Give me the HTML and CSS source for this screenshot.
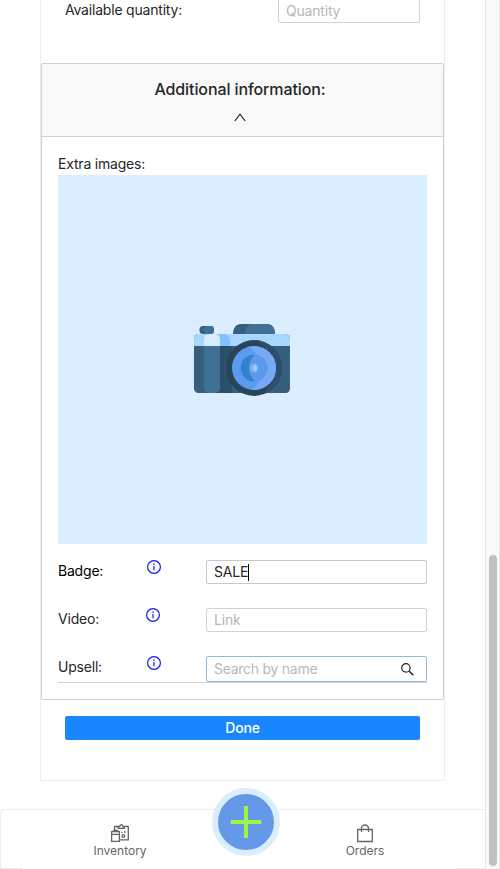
FILE: index.html
```html
<!DOCTYPE html>
<html lang="en">
<head>
<meta charset="utf-8">
<title>Add product</title>
<link rel="stylesheet" href="styles.css">
</head>
<body>
<div class="app">
  <div class="page">
    <main class="form">
      <div class="quantity">
        <label for="qty">Available quantity:</label>
        <input id="qty" class="field" type="text" placeholder="Quantity">
      </div>
      <section class="panel">
        <header class="panel-head">
          <h2>Additional information:</h2>
          <svg class="chevron" width="12" height="9" viewBox="0 0 12 9"><path d="M.8 8 6 1.2 11.2 8"/></svg>
        </header>
        <div class="panel-body">
          <div class="extra">Extra images:</div>
          <div class="picture">
            <svg width="120" height="94" viewBox="0 0 120 94">
              <defs>
                <clipPath id="body"><rect x="12" y="22" width="96" height="59" rx="4.5"/></clipPath>
                <clipPath id="ring"><circle cx="72" cy="56" r="28"/></clipPath>
                <clipPath id="glass"><circle cx="72" cy="56" r="22"/></clipPath>
                <clipPath id="iris"><circle cx="72" cy="56" r="13.3"/></clipPath>
                <clipPath id="flash"><path d="M51 22c0-6 3-10 8-10h26c5 0 8 4 8 10z"/></clipPath>
              </defs>
              <rect x="17.500" y="14" width="14.5" height="8" rx="3.5" fill="#365f7e"/>
              <path d="M24 14h5c4 0 4 8 0 8h-5c-3-2-3-6 0-8z" fill="#407093"/>
              <g clip-path="url(#flash)">
                <path fill="#365f7e" d="M50 12h45v10H50z"/>
                <path fill="#407093" d="M63 22c0-5 2-10 8-10h22v10z"/>
              </g>
              <g clip-path="url(#body)">
                <path fill="#365f7e" d="M12 22h96v59H12z"/>
                <path fill="#a9d6ff" d="M12 22h96v12H12z"/>
                <path fill="#82c3ff" d="M32 22h11q5 2 5 7v5H32z"/>
                <path fill="#2b506b" d="M32 34h18v47H32z"/>
                <rect x="22" y="22" width="16" height="59" rx="5" fill="#407093"/>
                <path fill="#d6edff" d="M22 34v-7q0-5 5-5h6q5 0 5 5v7z"/>
              </g>
              <g clip-path="url(#ring)">
                <path fill="#294459" d="M44 28h56v56H44z"/>
                <path fill="#2c506b" d="M72 28c18 8 29 39 7 56h25V28z"/>
              </g>
              <g clip-path="url(#glass)">
                <path fill="#5b9bed" d="M50 34h44v44H50z"/>
                <path fill="#78a9f8" d="M64 34c17 8 22 29 6 44h24V34z"/>
              </g>
              <g clip-path="url(#iris)">
                <path fill="#377fd0" d="M58 42h28v28H58z"/>
                <path fill="#5b9bed" d="M73 42c-8 9-8 19 0 28h14V42z"/>
              </g>
              <circle cx="72" cy="56" r="4.2" fill="#80b0f8"/>
              <ellipse cx="73.5" cy="56" rx="1.7" ry="3.2" fill="#a9cbfc"/>
            </svg>
          </div>
          <div class="row row-badge">
            <label for="badge">Badge:</label>
            <svg class="info" width="14" height="14" viewBox="0 0 14 14"><circle cx="7" cy="7" r="6.4"/><path d="M7 6v4.2M7 3.6v1.3"/></svg>
            <div class="field sale" id="badge">SALE<i class="caret"></i></div>
          </div>
          <div class="row row-video">
            <label for="video">Video:</label>
            <svg class="info" width="14" height="14" viewBox="0 0 14 14"><circle cx="7" cy="7" r="6.4"/><path d="M7 6v4.2M7 3.6v1.3"/></svg>
            <input id="video" class="field" type="text" placeholder="Link">
          </div>
          <div class="row row-upsell">
            <label for="upsell">Upsell:</label>
            <svg class="info" width="14" height="14" viewBox="0 0 14 14"><circle cx="7" cy="7" r="6.4"/><path d="M7 6v4.2M7 3.6v1.3"/></svg>
            <div class="field search">
              <input id="upsell" type="text" placeholder="Search by name">
              <svg width="13" height="13" viewBox="0 0 13 13"><circle cx="4.9" cy="4.9" r="4.2"/><path class="handle" d="m8 8 4.3 4.3"/></svg>
            </div>
          </div>
        </div>
      </section>
      <button class="done" type="button">Done</button>
    </main>
    <nav class="tabs">
      <a class="tab inventory">
        <svg width="20" height="19" viewBox="0 0 20 19"><path d="M4.600 7V2.500H8M15 2.500h3.300v13.400H10"/><path d="M8.300 2.500v1.800h6V2.500h-1.500Q12.600.700 11.300.700T9.800 2.500z"/><path d="M1.600 7.700h7.800v9.700H1.600zM1.600 10.300h7.800M3.500 7.500V6.300h4v1.200"/><circle cx="13.400" cy="12" r="1.400"/><path d="M11.200 8.400h1.300M14.800 7v2"/></svg>
        <span>Inventory</span>
      </a>
      <a class="tab orders">
        <svg width="18" height="19" viewBox="0 0 18 19"><path d="M1.700 5.500h14.600v12H1.700zM5.500 8V4.500a3.500 3.500 0 0 1 7 0V8"/></svg>
        <span>Orders</span>
      </a>
      <div class="add"><svg width="32" height="32" viewBox="0 0 32 32"><path d="M.700 16h30.600M16 0v32"/></svg></div>
    </nav>
  </div>
  <div class="scroll"><div class="thumb"></div></div>
</div>
</body>
</html>
```
FILE: styles.css
```css
* { box-sizing: border-box; }
body {
  margin: 0;
  background: #fff;
  color: #262626;
  font: 14px/22px Inter, "Liberation Sans", sans-serif;
  letter-spacing: -0.2px;
  overflow: hidden;
}
svg { display: block; fill: none; flex: none; }
.app { display: flex; width: 500px; height: 869px; }
.page { width: 485px; height: 869px; display: flex; flex-direction: column; }

.form {
  width: 405px;
  height: 781px;
  margin-left: 40px;
  border: 1px solid #ededed;
  border-top: 0;
  border-radius: 0 0 2px 2px;
}
.quantity {
  height: 63px;
  display: flex;
  justify-content: space-between;
  padding: 0 24px;
}
.quantity label { margin-top: -1px; }
.quantity .field { width: 142px; margin-top: -1px; }

.field {
  height: 24px;
  padding: 0 7px;
  border: 1px solid #d2d2d2;
  border-radius: 2px;
  background: #fff;
  color: #262626;
  font: inherit;
  letter-spacing: -0.2px;
  line-height: 22px;
  outline: 0;
}
input.field { padding-bottom: 2px; }
input::placeholder { color: #b7b7b7; opacity: 1; }

.panel {
  width: 403px;
  height: 637px;
  border: 1px solid #d2d2d2;
  border-radius: 2px;
}
.panel-head {
  height: 73px;
  border-bottom: 1px solid #d2d2d2;
  background: #f9f9f9;
  display: flex;
  flex-direction: column;
  align-items: center;
  padding-top: 13px;
}
.panel-head h2 { margin: 0; padding-right: 5px; font-size: 16px; line-height: 24px; font-weight: 500; letter-spacing: -0.1px; }
.chevron { margin: 12px 5px 0 0; stroke: #222; stroke-width: 1.2; }
.panel-body { padding: 16px; }
.extra { height: 22px; }
.picture {
  width: 369px;
  height: 369px;
  background: #dbeeff;
  display: flex;
  padding: 137px 0 0 124px;
}
.row { display: grid; grid-template-columns: 89px 59px 221px; height: 24px; }
.row-badge { margin-top: 16px; color: #000; }
.row-video, .row-upsell { margin-top: 24px; }
.row-upsell { height: 27px; border-bottom: 1px solid #d2d2d2; }
.info { stroke: #1717ee; stroke-width: 1.2; }
.row-video .info { margin-left: -1px; }
.sale { display: flex; align-items: center; border-color: #bccbd7; }
.caret { width: 1px; height: 17px; background: #000; }
.search {
  height: 26px;
  border-color: #91b9da;
  display: flex;
  align-items: center;
  justify-content: space-between;
  padding-right: 12px;
}
.search input { width: 160px; padding: 0; border: 0; font: inherit; letter-spacing: -0.27px; outline: 0; }
.search svg { stroke: #222; stroke-width: 1.2; }
.search .handle { stroke-width: 1.6; }
.done {
  display: block;
  width: 355px;
  height: 24px;
  margin: 16px 0 0 24px;
  padding: 0;
  border: 0;
  border-radius: 2px;
  background: #1a86fd;
  color: #fff;
  font: inherit;
  font-weight: 500;
  letter-spacing: -0.2px;
}

.tabs {
  position: relative;
  display: grid;
  grid-template-columns: 240px 245px;
  height: 60px;
  margin-top: 28px;
  border: solid #ededed;
  border-width: 1px 0 0 1px;
  border-radius: 5px 0 0 0;
  color: #656565;
  font-size: 12px;
  line-height: 16px;
  letter-spacing: 0;
  background:
    linear-gradient(#ededed, #ededed) 0 100% / 21px 1px no-repeat,
    linear-gradient(#ededed, #ededed) 100% 100% / 29px 1px no-repeat;
}
.tab { display: flex; flex-direction: column; align-items: center; padding-top: 14px; }
.tab svg { stroke: #656565; stroke-width: 1.3; }
.inventory { padding-right: 2px; }
.orders { padding-left: 3px; }
.add {
  position: absolute;
  left: 211px;
  top: -22px;
  width: 68px;
  height: 68px;
  border: 6px solid #dbeeff;
  border-radius: 50%;
  background: #6499ea;
  display: flex;
  align-items: center;
  justify-content: center;
}
.add svg { stroke: #9cf744; stroke-width: 4; }

.scroll { width: 15px; height: 869px; background: #fafafa; border: solid #e8e8e8; border-width: 0 1px; padding: 555px 0 0 3px; }
.thumb { width: 8px; height: 311px; border-radius: 4px; background: #c1c1c1; }
```
